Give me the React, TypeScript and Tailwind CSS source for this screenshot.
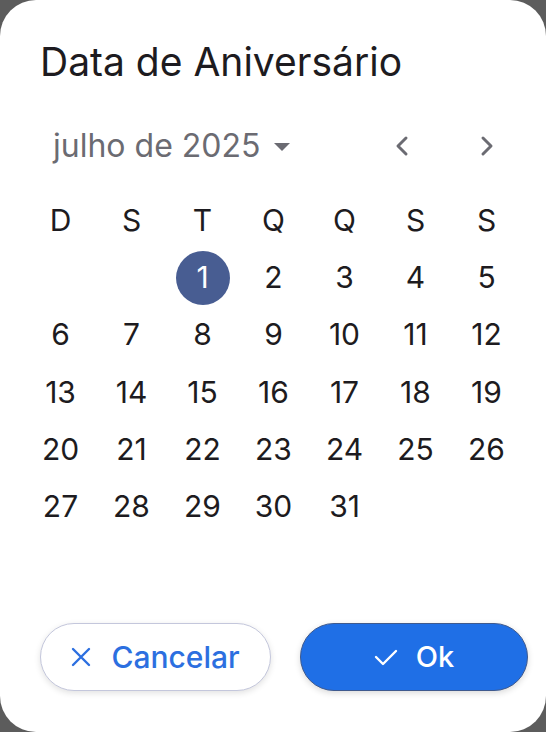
import React from "react";

const days: (number | null)[] = [null, null, ...Array.from({ length: 31 }, (_, i) => i + 1)];
const weeks: (number | null)[][] = [];
for (let i = 0; i < days.length; i += 7) weeks.push(days.slice(i, i + 7));
const heads = ["D", "S", "T", "Q", "Q", "S", "S"];

export default function App() {
  return (
    <div className="w-[546px] h-[732px] bg-[#5c5c5c] overflow-hidden" style={{ fontFamily: "Inter, 'Noto Sans', sans-serif" }}>
      <div className="w-[546px] h-[732px] bg-white rounded-[36px] flex flex-col">
        <div className="pl-[40px] pt-[38px] text-[39px] leading-[47px] text-[#1d1b20]">Data de Aniversário</div>
        <div className="flex items-center h-[40px] mt-[41px]">
          <div className="flex items-center pl-[53px] text-[32px] text-[#6b6b72]">
            <span>julho de 2025</span>
            <svg width="16" height="10" viewBox="0 0 16 10" className="ml-[14px] mt-[2px]">
              <path d="M0 1 L16 1 L8 9 Z" fill="#6b6b72" />
            </svg>
          </div>
          <div className="ml-auto flex items-center gap-[69px] pr-[51px]">
            <svg width="16" height="22" viewBox="0 0 16 22">
              <path d="M12 3 L4 11 L12 19" stroke="#6b6b72" strokeWidth="3" fill="none" strokeLinecap="round" strokeLinejoin="round" />
            </svg>
            <svg width="16" height="22" viewBox="0 0 16 22">
              <path d="M4 3 L12 11 L4 19" stroke="#6b6b72" strokeWidth="3" fill="none" strokeLinecap="round" strokeLinejoin="round" />
            </svg>
          </div>
        </div>
        <div className="pl-[25px] mt-[25px]">
          <div className="grid grid-cols-[repeat(7,71px)] h-[58px] items-center text-[30px] text-[#1d1b20]">
            {heads.map((h, i) => (
              <div key={i} className="flex justify-center">{h}</div>
            ))}
          </div>
          {weeks.map((w, wi) => (
            <div key={wi} className="grid grid-cols-[repeat(7,71px)] h-[57.3px] items-center text-[30px] text-[#1d1b20]">
              {w.map((d, di) => (
                <div key={di} className="flex justify-center items-center">
                  {d === 1 ? (
                    <div className="w-[54px] h-[54px] rounded-full bg-[#485d92] text-white flex items-center justify-center">1</div>
                  ) : (
                    <span>{d ?? ""}</span>
                  )}
                </div>
              ))}
            </div>
          ))}
        </div>
        <div className="mt-auto mb-[41px] flex pl-[40px]">
          <button className="w-[231px] h-[68px] rounded-full bg-white border border-[#c4c7dc] shadow-[0_2px_6px_rgba(0,0,0,0.12)] flex items-center justify-center text-[30px] text-[#2c6fe0] font-medium">
            <svg width="20" height="20" viewBox="0 0 20 20" className="mr-[20px]">
              <path d="M2 2 L18 18 M18 2 L2 18" stroke="#2c6fe0" strokeWidth="2.4" strokeLinecap="round" />
            </svg>
            <span>Cancelar</span>
          </button>
          <button className="ml-[29px] w-[228px] h-[68px] rounded-full bg-[#1f6fe6] border border-[#3f5a8e] shadow-[0_2px_6px_rgba(0,0,0,0.15)] flex items-center justify-center text-[29px] text-white font-medium">
            <svg width="24" height="18" viewBox="0 0 24 18" className="mr-[18px]">
              <path d="M2 9 L9 16 L22 3" stroke="white" strokeWidth="2.4" fill="none" strokeLinecap="round" strokeLinejoin="round" />
            </svg>
            <span>Ok</span>
          </button>
        </div>
      </div>
    </div>
  );
}
